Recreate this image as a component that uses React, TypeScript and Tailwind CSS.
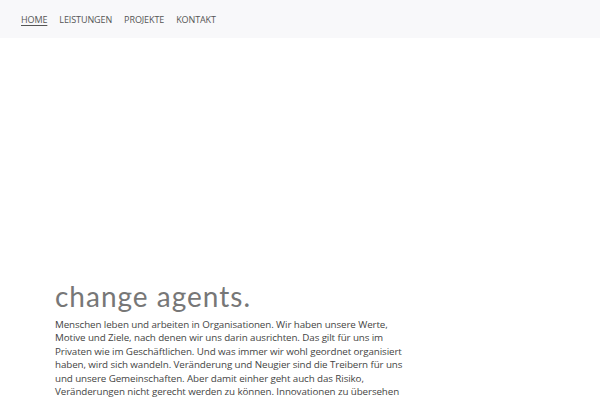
import React from "react";

const lines = [
  "Menschen leben und arbeiten in Organisationen. Wir haben unsere Werte,",
  "Motive und Ziele, nach denen wir uns darin ausrichten. Das gilt für uns im",
  "Privaten wie im Geschäftlichen. Und was immer wir wohl geordnet organisiert",
  "haben, wird sich wandeln. Veränderung und Neugier sind die Treibern für uns",
  "und unsere Gemeinschaften. Aber damit einher geht auch das Risiko,",
  "Veränderungen nicht gerecht werden zu können. Innovationen zu übersehen",
];

export default function App() {
  return (
    <div className="w-[600px] h-[400px] overflow-hidden bg-white" style={{ fontFamily: "'Open Sans', 'DejaVu Sans', sans-serif" }}>
      <nav className="h-[38px] bg-[#f8f8fa] flex items-center pl-[21px] pt-[2px] gap-[12px] text-[9px] tracking-[-0.1px] text-[#555] uppercase">
        <a className="underline underline-offset-2">Home</a>
        <a>Leistungen</a>
        <a>Projekte</a>
        <a>Kontakt</a>
      </nav>
      <main className="pl-[55px] pt-[244px]">
        <h1 className="text-[28px] leading-[28px] text-[#777] font-normal tracking-[1px]" style={{ fontFamily: "Lato, sans-serif" }}>change agents.</h1>
        <p className="mt-[8px] text-[9.8px] leading-[13.4px] tracking-[-0.1px] text-[#444] whitespace-nowrap">
          {lines.map((l, i) => (
            <span key={i} className="block">{l}</span>
          ))}
        </p>
      </main>
    </div>
  );
}
